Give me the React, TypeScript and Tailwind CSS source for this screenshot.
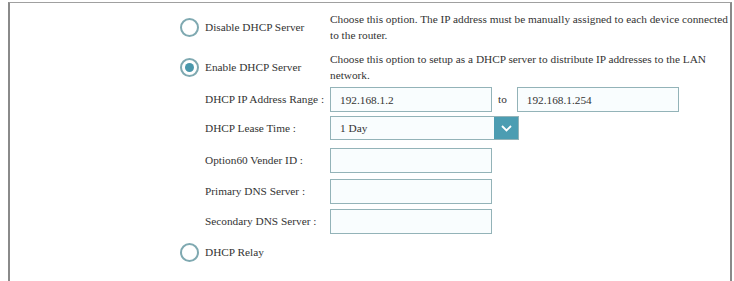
import type { ReactNode } from "react";

const Radio = ({ checked = false }: { checked?: boolean }) => (
  <span className="flex h-[19px] w-[19px] shrink-0 items-center justify-center rounded-full border-2 border-[#7fa9b1] bg-white">
    {checked && <span className="h-[9px] w-[9px] rounded-full bg-[#4a97ab]" />}
  </span>
);

const OptionRow = ({
  label,
  checked,
  children,
}: {
  label: string;
  checked?: boolean;
  children?: ReactNode;
}) => (
  <div className="flex items-center">
    <div className="flex w-[150px] shrink-0 items-center gap-[6px]">
      <Radio checked={checked} />
      <span className="whitespace-nowrap">{label}</span>
    </div>
    {children && <p className="w-[402px] leading-4">{children}</p>}
  </div>
);

const Field = ({ label, children, className = "" }: { label: string; children: ReactNode; className?: string }) => (
  <div className={`flex items-center pl-[25px] ${className}`}>
    <span className="w-[125px] shrink-0 whitespace-nowrap">{label}</span>
    {children}
  </div>
);

const TextBox = ({ value = "", className = "w-[162px]" }: { value?: string; className?: string }) => (
  <input
    className={`h-[25px] border border-[#93b3b8] bg-[#f9fdfe] px-[9px] text-[11.3px] text-[#333] outline-none ${className}`}
    defaultValue={value}
    readOnly
  />
);

const App = () => {
  return (
    <main className="h-[281px] w-[734px] overflow-hidden bg-white pl-[8px] pt-[2px] font-[family-name:Liberation_Serif,serif] text-[11.3px] text-[#333]">
      <section className="h-[279px] w-[724px] border-t border-r-2 border-l-2 border-t-[#a0a0a0] border-r-[#8a8a8a] border-l-[#8a8a8a] pl-[170px] pt-[8px]">
        <OptionRow label="Disable DHCP Server">
          Choose this option. The IP address must be manually assigned to each device connected to the router.
        </OptionRow>

        <div className="mt-[8px]">
          <OptionRow label="Enable DHCP Server" checked>
            Choose this option to setup as a DHCP server to distribute IP addresses to the LAN network.
          </OptionRow>
        </div>

        <Field label="DHCP IP Address Range :" className="mt-[4px]">
          <TextBox value="192.168.1.2" />
          <span className="ml-[6px] mr-[10px]">to</span>
          <TextBox value="192.168.1.254" />
        </Field>

        <Field label="DHCP Lease Time :" className="mt-[4px]">
          <div className="flex h-[24px] w-[189px] border border-[#93b3b8] bg-[#f9fdfe]">
            <span className="flex flex-1 items-center px-[9px]">1 Day</span>
            <span className="flex w-[24px] items-center justify-center bg-[#4c9db2]">
              <svg width="11" height="7" viewBox="0 0 11 7" fill="none">
                <path d="M1 1l4.5 4.5L10 1" stroke="white" strokeWidth="1.8" />
              </svg>
            </span>
          </div>
        </Field>

        <Field label="Option60 Vender ID :" className="mt-[8px]">
          <TextBox />
        </Field>

        <Field label="Primary DNS Server :" className="mt-[6px]">
          <TextBox />
        </Field>

        <Field label="Secondary DNS Server :" className="mt-[5px]">
          <TextBox />
        </Field>

        <div className="mt-[9px]">
          <OptionRow label="DHCP Relay" />
        </div>
      </section>
    </main>
  );
};

export default App;
